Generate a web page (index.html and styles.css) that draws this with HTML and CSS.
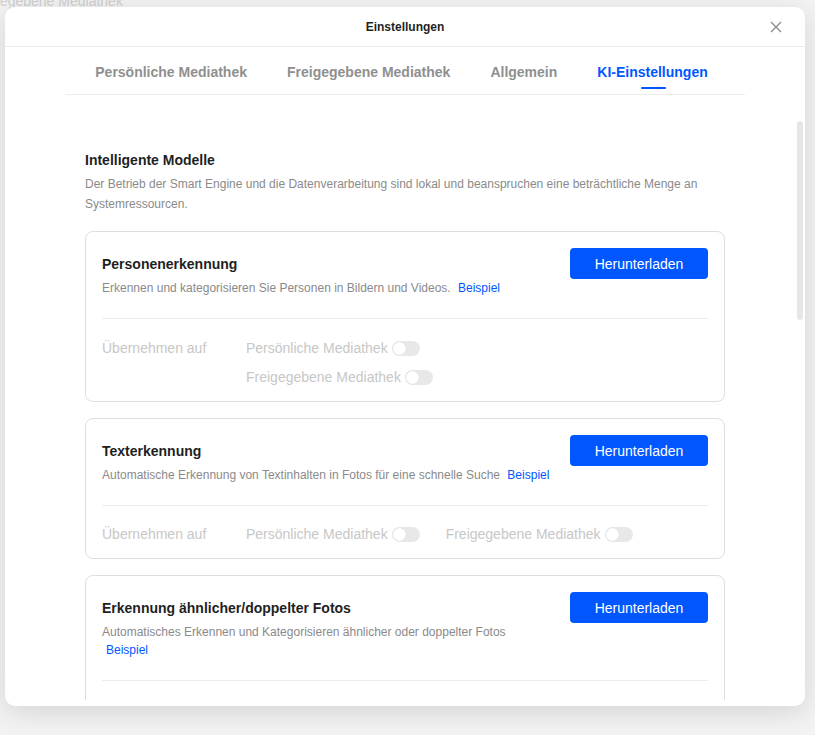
FILE: index.html
```html
<!DOCTYPE html>
<html lang="de">
<head>
<meta charset="utf-8">
<title>Einstellungen</title>
<link rel="stylesheet" href="styles.css">
</head>
<body>
<div class="backdrop-text">Freigegebene Mediathek</div>
<div class="modal">
  <header class="modal-header">
    <span></span>
    <h1 class="modal-title">Einstellungen</h1>
    <button class="close" aria-label="Schließen">
      <svg width="12" height="12" viewBox="0 0 12 12"><path d="M1 1 L11 11 M11 1 L1 11" stroke="#8a8a8a" stroke-width="1.3" fill="none"/></svg>
    </button>
  </header>
  <nav class="tabs">
    <a class="tab">Persönliche Mediathek</a>
    <a class="tab">Freigegebene Mediathek</a>
    <a class="tab">Allgemein</a>
    <a class="tab active">KI-Einstellungen</a>
  </nav>
  <main class="content">
    <h2 class="section-title">Intelligente Modelle</h2>
    <p class="section-desc">Der Betrieb der Smart Engine und die Datenverarbeitung sind lokal und beanspruchen eine beträchtliche Menge an Systemressourcen.</p>

    <section class="card">
      <div class="card-head">
        <div class="card-info">
          <h3 class="card-title">Personenerkennung</h3>
          <p class="card-desc">Erkennen und kategorisieren Sie Personen in Bildern und Videos. <a class="link">Beispiel</a></p>
        </div>
        <button class="btn">Herunterladen</button>
      </div>
      <div class="apply apply--stacked">
        <span class="apply-label">Übernehmen auf</span>
        <div class="apply-options">
          <label class="opt">Persönliche Mediathek<span class="toggle"></span></label>
          <label class="opt">Freigegebene Mediathek<span class="toggle"></span></label>
        </div>
      </div>
    </section>

    <section class="card">
      <div class="card-head">
        <div class="card-info">
          <h3 class="card-title">Texterkennung</h3>
          <p class="card-desc">Automatische Erkennung von Textinhalten in Fotos für eine schnelle Suche <a class="link">Beispiel</a></p>
        </div>
        <button class="btn">Herunterladen</button>
      </div>
      <div class="apply apply--inline">
        <span class="apply-label">Übernehmen auf</span>
        <div class="apply-options">
          <label class="opt">Persönliche Mediathek<span class="toggle"></span></label>
          <label class="opt">Freigegebene Mediathek<span class="toggle"></span></label>
        </div>
      </div>
    </section>

    <section class="card">
      <div class="card-head">
        <div class="card-info">
          <h3 class="card-title">Erkennung ähnlicher/doppelter Fotos</h3>
          <p class="card-desc">Automatisches Erkennen und Kategorisieren ähnlicher oder doppelter Fotos <a class="link link--block">Beispiel</a></p>
        </div>
        <button class="btn">Herunterladen</button>
      </div>
      <div class="apply apply--inline">
        <span class="apply-label">Übernehmen auf</span>
        <div class="apply-options">
          <label class="opt">Persönliche Mediathek<span class="toggle"></span></label>
          <label class="opt">Freigegebene Mediathek<span class="toggle"></span></label>
        </div>
      </div>
    </section>
  </main>
  <div class="scroll-thumb"></div>
</div>
</body>
</html>
```

FILE: styles.css
```css
* { box-sizing: border-box; }

html, body {
  margin: 0;
  padding: 0;
}

body {
  width: 815px;
  height: 735px;
  overflow: hidden;
  background: #f3f3f3;
  font-family: "Liberation Sans", Arial, sans-serif;
  position: relative;
}

.backdrop-text {
  position: absolute;
  left: -32px;
  top: -7px;
  font-size: 14px;
  line-height: 16px;
  color: #cfcfcf;
  white-space: nowrap;
}

.modal {
  position: relative;
  margin: 7px 0 0 5px;
  width: 800px;
  height: 699px;
  padding-bottom: 6px;
  background: #fff;
  border-radius: 10px;
  box-shadow: 0 6px 28px rgba(0, 0, 0, 0.13);
  overflow: hidden;
  display: flex;
  flex-direction: column;
}

.modal-header {
  height: 40px;
  flex: none;
  border-bottom: 1px solid #ebebeb;
  display: grid;
  grid-template-columns: 1fr auto 1fr;
  align-items: center;
}

.modal-title {
  margin: 0;
  font-size: 12px;
  font-weight: bold;
  color: #1f1f1f;
  line-height: 16px;
}

.close {
  justify-self: end;
  margin-right: 23px;
  width: 12px;
  height: 12px;
  padding: 0;
  border: 0;
  background: none;
  display: flex;
}

.tabs {
  flex: none;
  height: 48px;
  margin: 0 60px;
  border-bottom: 1px solid #ededed;
  display: flex;
  justify-content: center;
  gap: 40px;
  padding-left: 2px;
  padding-right: 9px;
}

.tab {
  position: relative;
  display: flex;
  align-items: center;
  padding-top: 3px;
  font-size: 14px;
  font-weight: bold;
  color: #8f8f8f;
  white-space: nowrap;
}

.tab.active {
  color: #0057ff;
}

.tab.active::after {
  content: "";
  position: absolute;
  left: 50%;
  bottom: 5px;
  width: 25px;
  margin-left: -12px;
  height: 2px;
  border-radius: 1px;
  background: #0057ff;
}

.content {
  flex: 1;
  overflow: hidden;
  padding: 55px 80px 0;
}

.section-title {
  margin: 0;
  font-size: 14px;
  line-height: 20px;
  font-weight: bold;
  color: #1f1f1f;
}

.section-desc {
  margin: 4px 0 17px;
  font-size: 12px;
  line-height: 20px;
  color: #8a8a8a;
}

.card {
  border: 1px solid #dedede;
  border-radius: 8px;
  padding: 16px 16px 14px;
  margin-bottom: 16px;
}

.card-head {
  display: flex;
  gap: 16px;
  align-items: flex-start;
  border-bottom: 1px solid #ececec;
  padding-bottom: 21px;
}

.card-info {
  flex: 1;
  padding-top: 6px;
}

.card-title {
  margin: 0;
  font-size: 14px;
  line-height: 20px;
  font-weight: bold;
  color: #1f1f1f;
}

.card-desc {
  margin: 5px 0 0;
  font-size: 12px;
  line-height: 18px;
  color: #8a8a8a;
}

.link {
  color: #0057ff;
  margin-left: 4px;
}

.link--block {
  display: block;
}

.btn {
  flex: none;
  width: 138px;
  height: 31px;
  border: 0;
  border-radius: 4px;
  background: #0057ff;
  color: #fff;
  font-family: "Liberation Sans", Arial, sans-serif;
  font-size: 14px;
}

.apply {
  display: flex;
  margin-top: 19px;
  font-size: 14px;
  line-height: 20px;
  color: #c7c7c7;
}

.apply--inline {
  line-height: 19px;
}

.apply-label {
  width: 144px;
  flex: none;
}

.apply-options {
  display: flex;
  gap: 26px;
}

.apply--stacked .apply-options {
  flex-direction: column;
  gap: 9px;
}

.opt {
  display: flex;
  align-items: center;
  gap: 4px;
  white-space: nowrap;
}

.toggle {
  position: relative;
  width: 28px;
  height: 15px;
  border-radius: 8px;
  background: #e8e8e8;
}

.toggle::before {
  content: "";
  position: absolute;
  left: 1px;
  top: 1px;
  width: 13px;
  height: 13px;
  border-radius: 50%;
  background: #fff;
  box-shadow: 0 0 1px rgba(0, 0, 0, 0.15);
}

.scroll-thumb {
  position: absolute;
  right: 2px;
  top: 114px;
  width: 6px;
  height: 199px;
  border-radius: 3px;
  background: #e6e6e6;
}
```
